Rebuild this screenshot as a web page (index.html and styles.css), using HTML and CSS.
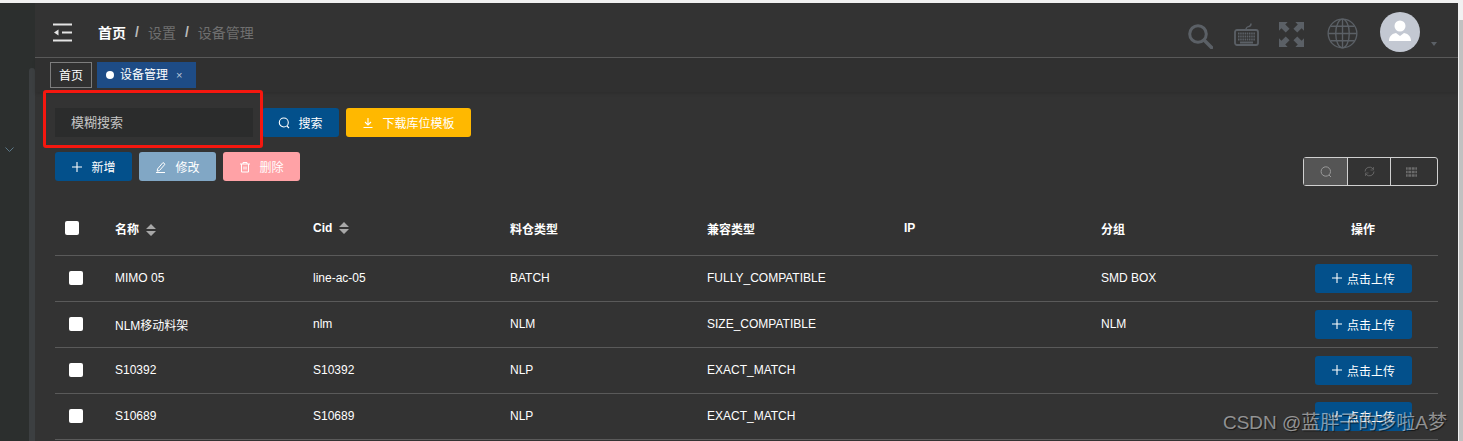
FILE: index.html
```html
<!DOCTYPE html>
<html lang="zh">
<head>
<meta charset="utf-8">
<title>设备管理</title>
<link rel="stylesheet" href="styles.css">
</head>
<body>
<div class="app">
  <aside class="side">
    <div class="side-main">
      <svg class="chev" width="9" height="5" viewBox="0 0 9 5"><path d="M.5.500l4 4 4-4" fill="none" stroke="#5c7888" stroke-width="1"/></svg>
    </div>
    <div class="side-bar"><div class="side-thumb"></div></div>
  </aside>
  <main class="main">
    <header class="top">
      <svg class="burger" width="19" height="19" viewBox="0 0 19 19"><path d="M0 1.500h19M9 9.500h10M0 17.500h19" stroke="#e4e4e4" stroke-width="2" fill="none"/><path d="M1 9.500l4.500-3v6z" fill="#e4e4e4"/></svg>
      <nav class="crumbs"><b>首页</b><i>/</i><span>设置</span><i>/</i><span>设备管理</span></nav>
      <div class="tools">
        <svg class="t-search" width="25" height="25" viewBox="0 0 25 25"><circle cx="10" cy="10" r="8.300" fill="none" stroke="#5b6066" stroke-width="3"/><path d="M16.500 16.500l7 7" stroke="#5b6066" stroke-width="3.500" stroke-linecap="round"/></svg>
        <svg class="t-key" width="25" height="23" viewBox="0 0 25 23"><path d="M12 7c0-3 1-3 3-3.500 2-.5 2-1.500 2-3" fill="none" stroke="#5b6066" stroke-width="1.500"/><rect x="1" y="7" width="23" height="15" rx="2" fill="none" stroke="#5b6066" stroke-width="1.800"/><path d="M4 10.500h17M4 13.500h17M4 16.500h17" stroke="#5b6066" stroke-width="2" stroke-dasharray="1.500 .7"/><path d="M6 19.500h13" stroke="#5b6066" stroke-width="2"/></svg>
        <svg class="t-full" width="25" height="25" viewBox="0 0 26 26"><path fill="#5b6066" d="M0 0h9L6.500 2.500 11 7 7 11 2.500 6.500 0 9zM26 0v9l-2.500-2.500L19 11l-4-4 4.500-4.500L17 0zM0 26v-9l2.500 2.500L7 15l4 4-4.500 4.500L9 26zM26 26h-9l2.500-2.500L15 19l4-4 4.500 4.500L26 17z"/></svg>
        <svg class="t-globe" width="31" height="31" viewBox="0 0 32 32" fill="none" stroke="#5b6066" stroke-width="1.400"><circle cx="16" cy="16" r="14.800"/><ellipse cx="16" cy="16" rx="7" ry="14.800"/><path d="M16 1v30M1.200 16h29.600M3.500 8.500h25M3.500 23.500h25"/></svg>
        <div class="avatar"><svg width="40" height="40" viewBox="0 0 40 40"><circle cx="20" cy="20" r="20" fill="#c3c8d2"/><circle cx="20" cy="14" r="5.500" fill="#fff"/><path d="M9 29c0-4 2-7 7-8l4 3 4-3c5 1 7 4 7 8z" fill="#fff"/></svg></div>
        <span class="caret"></span>
      </div>
    </header>
    <div class="tabs">
      <span class="tab">首页</span>
      <span class="tab active"><em></em>设备管理<small>×</small></span>
    </div>
    <section class="content">
      <div class="search-row">
        <div class="input">模糊搜索</div>
        <button class="btn blue w-search"><svg width="12" height="12" viewBox="0 0 12 12"><circle cx="5.800" cy="5.500" r="4.500" fill="none" stroke="#fff" stroke-width="1.100"/><path d="M9 9l2 2" stroke="#fff" stroke-width="1.100"/></svg>搜索</button>
        <button class="btn amber w-down"><svg width="12" height="12" viewBox="0 0 12 12"><path d="M6 1v6.500M3 5l3 3 3-3M1.500 10.500h9" fill="none" stroke="#fff" stroke-width="1.100"/></svg>下载库位模板</button>
      </div>
      <div class="act-row">
        <button class="btn blue w-act"><svg width="12" height="12" viewBox="0 0 12 12"><path d="M6 1v10M1 6h10" stroke="#fff" stroke-width="1.100"/></svg>新增</button>
        <button class="btn steel w-act"><svg width="12" height="12" viewBox="0 0 12 12"><path d="M2.500 8l5.500-6.500 2 1.700-5.500 6.300-2.300.7zM1 11.500h9" fill="none" stroke="#fff" stroke-width="1"/></svg>修改</button>
        <button class="btn pink w-act"><svg width="12" height="12" viewBox="0 0 12 12"><path d="M1 3h10M4 3V1.500h4V3M2.500 3v8h7V3M5 5.500v3M7 5.500v3" fill="none" stroke="#fff" stroke-width="1"/></svg>删除</button>
        <div class="group">
          <span class="on"><svg width="12" height="12" viewBox="0 0 12 12"><circle cx="5.800" cy="5.500" r="4.700" fill="none" stroke="#9a9a9a" stroke-width="1"/><path d="M9 9l2 2" stroke="#9a9a9a"/></svg></span>
          <span><svg width="11" height="11" viewBox="0 0 11 11"><path d="M1 5.500a4.500 4.500 0 0 1 8-2.700M10 5.500a4.500 4.500 0 0 1-8 2.700" fill="none" stroke="#666" stroke-width="1"/><path d="M9.500 1v3h-3M1.500 10V7h3" fill="none" stroke="#666" stroke-width=".8"/></svg></span>
          <span class="last"><svg width="11" height="10" viewBox="0 0 11 10"><path d="M0 1.500h11M0 5h11M0 8.500h11" stroke="#6a6a6a" stroke-width="2.400"/><path d="M2 0v10M5.500 0v10M9 0v10" stroke="#333" stroke-width=".7"/></svg></span>
        </div>
      </div>
      <table class="grid">
        <thead>
          <tr>
            <th class="c0"><span class="box"></span></th>
            <th class="c1">名称<svg class="sort" width="10" height="12" viewBox="0 0 10 12"><path d="M5 0l5 5H0zM5 12l5-5H0z" fill="#a8a8a8"/></svg></th>
            <th class="c2">Cid<svg class="sort" width="10" height="12" viewBox="0 0 10 12"><path d="M5 0l5 5H0zM5 12l5-5H0z" fill="#a8a8a8"/></svg></th>
            <th class="c3">料仓类型</th>
            <th class="c4">兼容类型</th>
            <th class="c5">IP</th>
            <th class="c6">分组</th>
            <th class="c7">操作</th>
          </tr>
        </thead>
        <tbody>
          <tr><td class="c0"><span class="box"></span></td><td>MIMO 05</td><td>line-ac-05</td><td>BATCH</td><td>FULLY_COMPATIBLE</td><td></td><td>SMD BOX</td><td class="c7"><button class="up"><svg width="12" height="12" viewBox="0 0 12 12"><path d="M6 1v10M1 6h10" stroke="#fff" stroke-width="1.100"/></svg>点击上传</button></td></tr>
          <tr><td class="c0"><span class="box"></span></td><td>NLM移动料架</td><td>nlm</td><td>NLM</td><td>SIZE_COMPATIBLE</td><td></td><td>NLM</td><td class="c7"><button class="up"><svg width="12" height="12" viewBox="0 0 12 12"><path d="M6 1v10M1 6h10" stroke="#fff" stroke-width="1.100"/></svg>点击上传</button></td></tr>
          <tr><td class="c0"><span class="box"></span></td><td>S10392</td><td>S10392</td><td>NLP</td><td>EXACT_MATCH</td><td></td><td></td><td class="c7"><button class="up"><svg width="12" height="12" viewBox="0 0 12 12"><path d="M6 1v10M1 6h10" stroke="#fff" stroke-width="1.100"/></svg>点击上传</button></td></tr>
          <tr><td class="c0"><span class="box"></span></td><td>S10689</td><td>S10689</td><td>NLP</td><td>EXACT_MATCH</td><td></td><td></td><td class="c7"><button class="up"><svg width="12" height="12" viewBox="0 0 12 12"><path d="M6 1v10M1 6h10" stroke="#fff" stroke-width="1.100"/></svg>点击上传</button></td></tr>
        </tbody>
      </table>
    </section>
  </main>
  <div class="page-scroll"><div class="page-thumb"></div></div>
</div>
<div class="highlight"></div>
<div class="mark">CSDN @蓝胖子的多啦A梦</div>
</body>
</html>
```
FILE: styles.css
```css
* { box-sizing: border-box; }
html, body { margin: 0; height: 100%; overflow: hidden; background: #f1f1f1; }
body { font-family: "Liberation Sans", "Noto Sans CJK SC", sans-serif; font-size: 12px; color: #fff; }
.app { display: flex; height: 438px; margin-top: 3px; background: #333; }
.side { width: 35px; display: flex; flex: none; background: #2c2f2e; }
.side-main { width: 29px; padding: 144px 0 0 5px; }
.chev { display: block; }
.side-bar { width: 6px; padding-top: 65px; }
.side-thumb { height: 100%; background: #3c3f41; border-radius: 3px 3px 0 0; }
.main { flex: 1; min-width: 0; }
.top { height: 55px; border-bottom: 1px solid #5a5a5a; display: flex; align-items: center; padding: 4px 21px 0 18px; }
.burger { flex: none; }
.crumbs { margin-left: 26px; font-size: 14px; color: #6f6f6f; display: flex; align-items: center; }
.crumbs b { color: #fff; font-weight: bold; }
.crumbs i { font-style: normal; font-weight: bold; color: #bbb; margin: 0 9px; }
.tools { margin-left: auto; display: flex; align-items: center; }
.t-search { margin-top: 9px; }
.t-key { margin: 5px 0 0 21px; }
.t-full { margin: 5px 0 0 20px; }
.t-globe { margin: 3px 0 0 23px; }
.avatar { margin-left: 22px; width: 40px; height: 40px; }
.avatar svg { display: block; }
.caret { border: 3.5px solid transparent; border-top: 4px solid #5b6066; border-bottom: 0; margin: 24px 0 0 11px; }
.tabs { height: 34px; padding: 4px 0 0 15px; display: flex; gap: 5px; align-items: flex-start; background: #303030; box-shadow: 0 2px 3px rgba(0,0,0,.1); }
.tab { height: 26px; border: 1px solid #7d7d7d; padding: 0 8px; line-height: 26px; font-size: 12px; }
.tab.active { background: #1e4c86; border-color: #1e4c86; padding: 0 13px 0 8px; display: flex; align-items: center; }
.tab em { width: 8px; height: 8px; border-radius: 50%; background: #fff; margin-right: 6px; }
.tab small { font-size: 11px; color: #bcc8da; margin-left: 8px; }
.content { padding: 16px 20px 0 20px; }
.search-row, .act-row { display: flex; }
.search-row { gap: 7px; }
.input { width: 198px; height: 29px; background: #2b2c2c; color: #c4c4c4; font-size: 13px; line-height: 30px; padding-left: 16px; margin-right: 2px; }
.btn { height: 29px; border: 0; border-radius: 3px; color: #fff; font: inherit; display: flex; align-items: center; justify-content: center; gap: 8px; padding: 0; }
.blue { background: #03508b; }
.amber { background: #ffb800; }
.steel { background: #81a7c5; }
.pink { background: #ffa2a6; }
.w-search { width: 77px; }
.w-down { width: 125px; }
.w-act { width: 77px; }
.act-row { margin-top: 15px; gap: 7px; }
.group { margin-left: auto; margin-top: 5px; display: flex; height: 29px; border: 1px solid #d0d0d0; border-radius: 3px; width: 135px; }
.group span { width: 43px; flex: none; display: flex; align-items: center; justify-content: center; }
.group span + span { border-left: 1px solid #d0d0d0; }
.group .last { width: 47px; padding-right: 5px; }
.group .on { background: #555; }
.group svg { display: block; }
.grid { width: 1383px; border-collapse: collapse; table-layout: fixed; margin-top: 16px; font-size: 12px; }
.grid th { height: 53px; text-align: left; padding: 0; font-weight: bold; border-bottom: 1px solid #5a5a5a; }
.grid td { height: 46px; padding: 0; border-bottom: 1px solid #5a5a5a; }
.c0 { width: 60px; }
.c1 { width: 198px; }
.c2, .c3, .c4, .c5, .c6 { width: 197px; }
.grid th.c7, .grid td.c7 { text-align: center; padding-right: 10px; }
.box { display: block; width: 14px; height: 14px; background: #fff; border-radius: 2px; margin-left: 14px; }
th .box { margin-left: 10px; }
.sort { margin-left: 7px; vertical-align: -2px; }
.up { width: 97px; height: 29px; background: #03508b; border: 0; border-radius: 3px; color: #fff; font: inherit; display: inline-flex; align-items: center; justify-content: center; gap: 4px; padding: 0; vertical-align: middle; }
.page-scroll { width: 5px; flex: none; background: #f1f1f1; padding: 17px 0 0 1px; }
.page-thumb { height: 100%; background: #c1c1c1; }
.highlight { position: absolute; left: 43px; top: 90px; width: 220px; height: 58px; border: 3px solid #f5170f; border-radius: 3px; }
.mark { position: absolute; right: 16px; top: 407px; font-size: 19px; color: rgba(255,255,255,.5); text-shadow: 1px 1px 1px rgba(0,0,0,.6); white-space: nowrap; }
```
